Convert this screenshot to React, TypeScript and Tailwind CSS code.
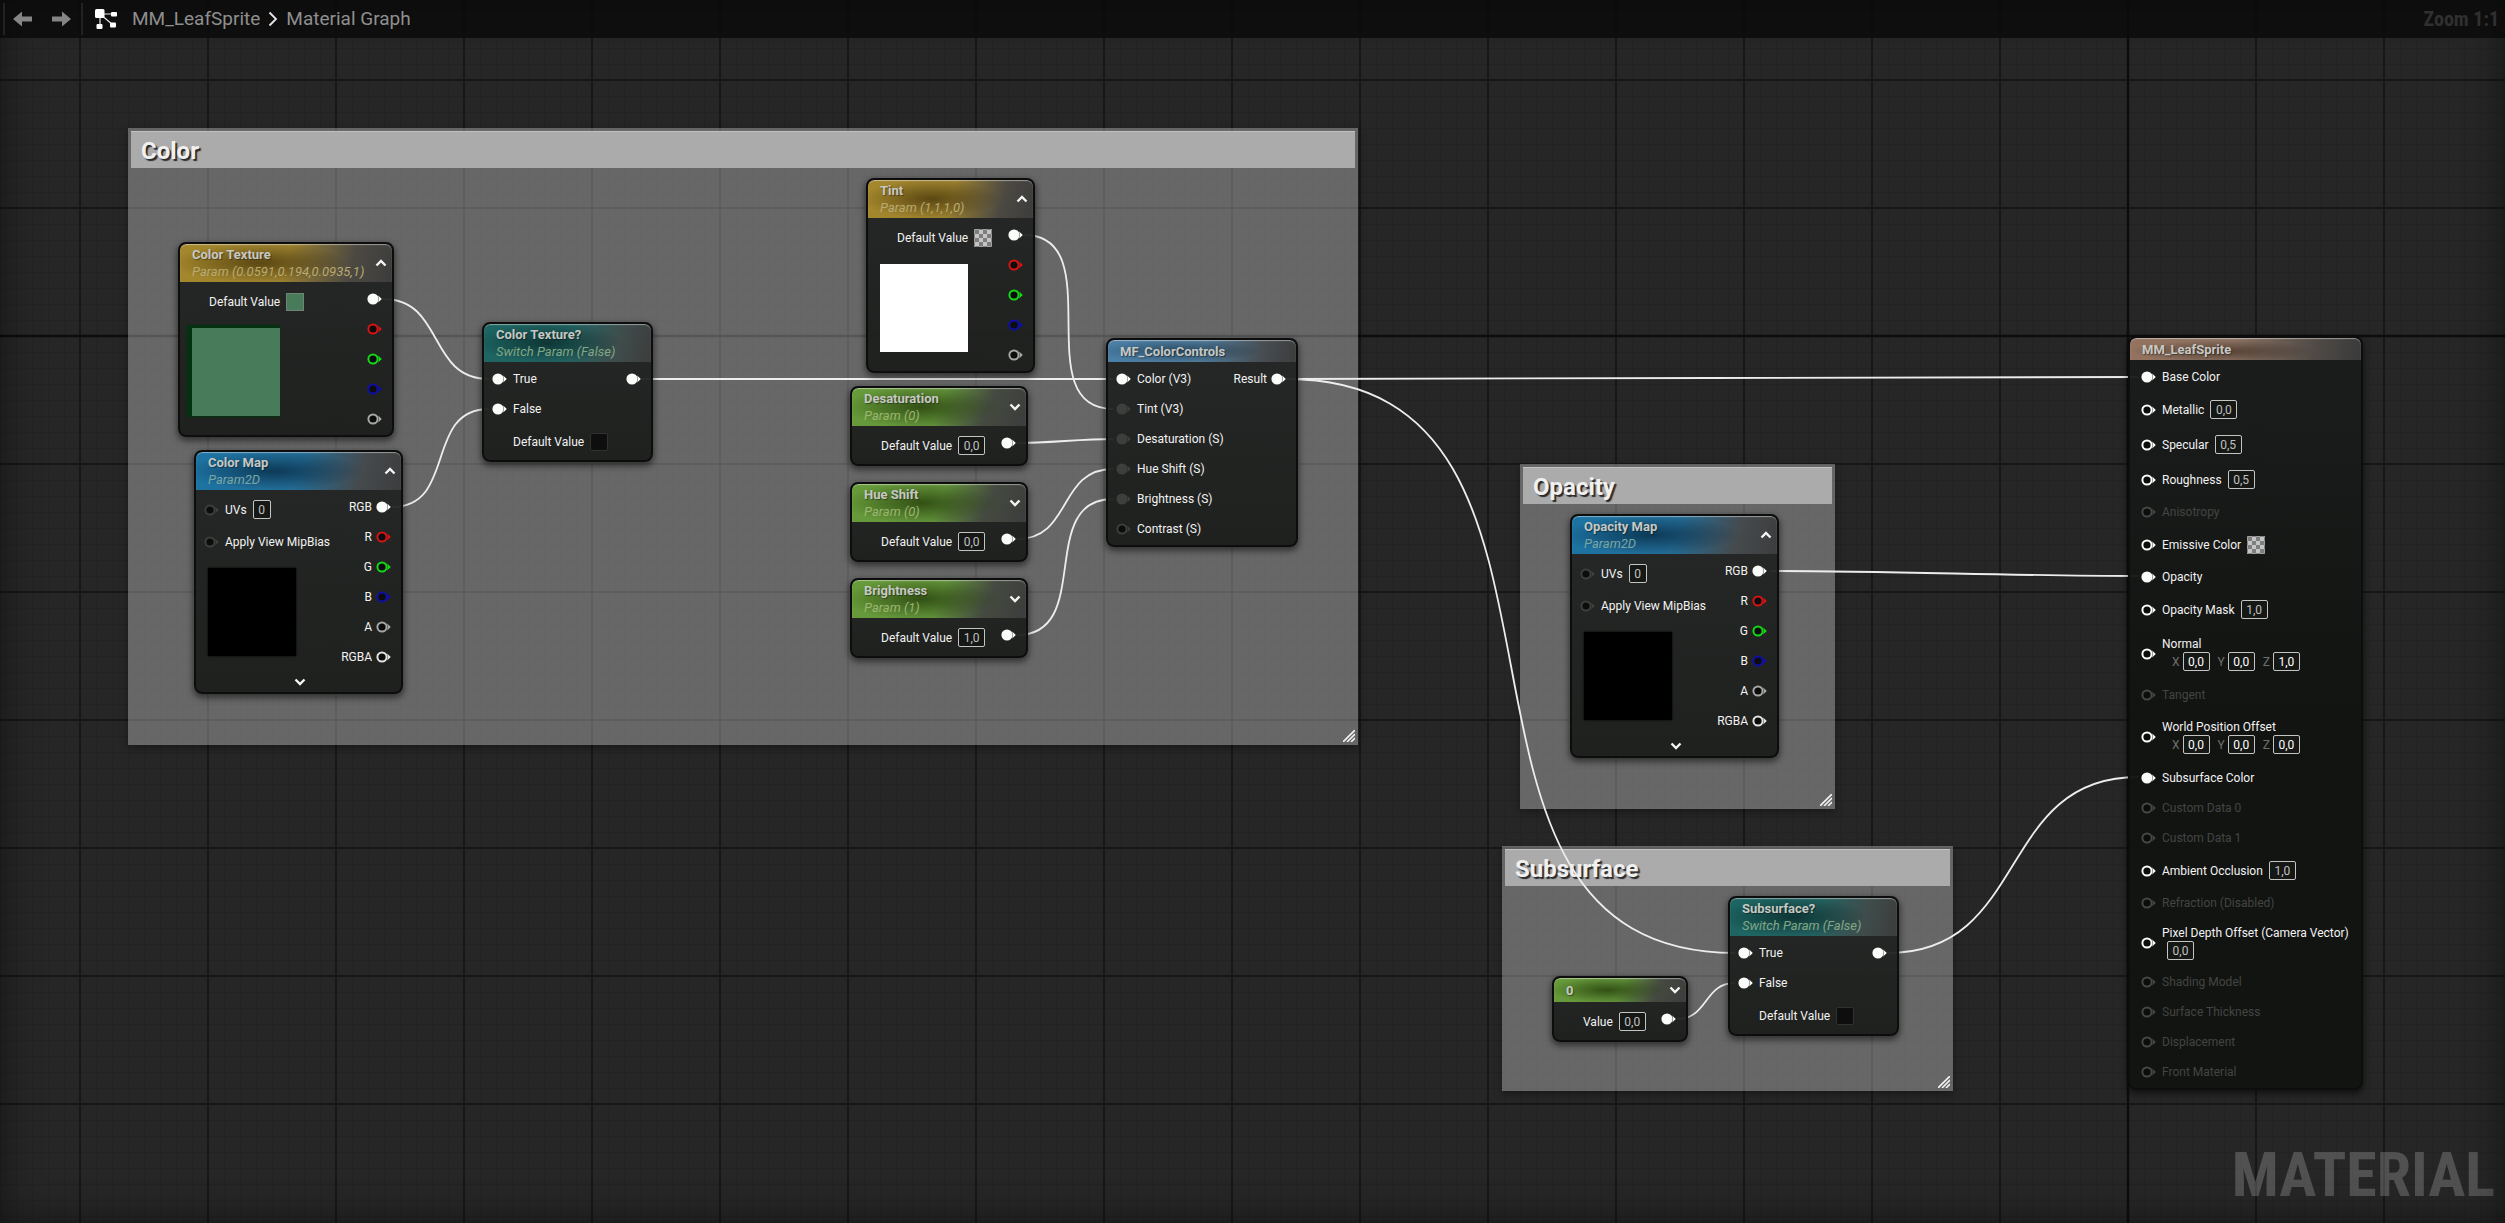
import React from "react";

type Point = [number, number];
type Tone = "yellow" | "teal" | "blue" | "steel" | "green" | "brown";

const HEADER_TONE: Record<Tone, string> = {
  yellow:
    "bg-[radial-gradient(ellipse_42%_50%_at_38%_50%,rgba(50,36,0,0.62),transparent),linear-gradient(105deg,#a5882c_0%,#9a8030_50%,#4c4942_80%,#3c3c3c_100%)]",
  teal:
    "bg-[radial-gradient(ellipse_44%_54%_at_38%_50%,rgba(0,22,22,0.6),transparent),linear-gradient(105deg,#1c6562_0%,#236664_50%,#3f4c4b_80%,#3c3c3c_100%)]",
  blue:
    "bg-[radial-gradient(ellipse_44%_50%_at_38%_50%,rgba(0,26,46,0.62),transparent),linear-gradient(105deg,#1c74a4_0%,#236c96_50%,#464a4d_80%,#3c3c3c_100%)]",
  steel:
    "bg-[radial-gradient(ellipse_44%_50%_at_38%_50%,rgba(8,24,38,0.5),transparent),linear-gradient(100deg,#4a7fa6_0%,#4f7a99_50%,#474d52_82%,#3c3c3c_100%)]",
  green:
    "bg-[radial-gradient(ellipse_44%_54%_at_40%_50%,rgba(24,44,0,0.66),transparent),linear-gradient(112deg,#679b39_0%,#64953c_50%,#454b40_76%,#3c3c3c_100%)]",
  brown:
    "bg-[radial-gradient(ellipse_40%_50%_at_40%_60%,rgba(40,26,16,0.55),transparent),linear-gradient(100deg,#94735f_0%,#8a7162_45%,#4f4a46_80%,#3a3a3a_100%)]",
};

const SUBTITLE_TONE: Record<Tone, string> = {
  yellow: "text-[#b9aa72]",
  teal: "text-[#82a786]",
  blue: "text-[#7ba5a2]",
  steel: "text-[#9fb0a0]",
  green: "text-[#9cb570]",
  brown: "text-[#b0a090]",
};

const WHITE = "#fbfdfa";
const DIM = "#3d3f3c";

function Pin({ color = WHITE, filled = false }: { color?: string; filled?: boolean }) {
  return (
    <svg width="15" height="12" viewBox="0 0 15 12" className="shrink-0" aria-hidden="true">
      <circle cx="6" cy="6" r="4.6" stroke={color} strokeWidth="2" fill={filled ? color : "#0b0c0b"} />
      <path d="M11.2 2.6 L14.8 6 L11.2 9.4 Q12.6 6 11.2 2.6 Z" fill={color} />
    </svg>
  );
}

function Chevron({ up = false }: { up?: boolean }) {
  return (
    <svg width="12" height="12" viewBox="0 0 12 12" aria-hidden="true">
      <path
        d={up ? "M1.5 8.5 L6 4 L10.5 8.5" : "M1.5 3.5 L6 8 L10.5 3.5"}
        stroke="#f4f4f4"
        strokeWidth="2.4"
        fill="none"
      />
    </svg>
  );
}

function NumberBox({ value, label, bright = false }: { value: string; label: string; bright?: boolean }) {
  return (
    <input
      aria-label={label}
      defaultValue={value}
      className={`h-[19px] rounded-xs border border-[#c4c4c4] bg-[#161816] p-0 text-center text-xs ${
        value.length > 1 ? "w-[27px]" : "w-[18px]"
      } ${bright ? "text-white" : "text-[#c0c0c0]"}`}
    />
  );
}

function Swatch({ label, color }: { label: string; color?: string }) {
  return (
    <button
      type="button"
      aria-label={label}
      className={`size-[18px] border border-[#8a8a8a]/60 ${
        color ?? "bg-[repeating-conic-gradient(#c4c4c4_0_25%,#7e7e7e_0_50%)] bg-[length:8px_8px]"
      }`}
    />
  );
}

function Check({ label }: { label: string }) {
  return (
    <input
      type="checkbox"
      aria-label={label}
      className="size-[18px] appearance-none rounded-xs border border-[#303230] bg-[#0d0e0d]"
    />
  );
}

/* ---------- node rows ---------- */

function InputRow({
  label,
  tall = false,
  pin = true,
  filled = false,
  dim = false,
  disabled = false,
  children,
}: {
  label: string;
  tall?: boolean;
  pin?: boolean;
  filled?: boolean;
  dim?: boolean;
  disabled?: boolean;
  children?: React.ReactNode;
}) {
  return (
    <div className={`flex items-center gap-1.5 ${tall ? "h-[35px]" : "h-[30px]"}`}>
      {pin ? <Pin color={disabled ? "#454745" : dim ? DIM : WHITE} filled={filled} /> : <span className="w-[15px]" />}
      <span className={disabled ? "text-[#434543]" : "text-[#f2f2f2]"}>{label}</span>
      {children}
    </div>
  );
}

function StackedRow({ label, tight = false, children }: { label: string; tight?: boolean; children: React.ReactNode }) {
  return (
    <div className={`flex items-center gap-1.5 ${tight ? "py-[7px]" : "py-[9px]"}`}>
      <Pin />
      <div className="flex flex-col">
        <span className="leading-4 text-[#f2f2f2]">{label}</span>
        {children}
      </div>
    </div>
  );
}

function VectorFields({ label, values }: { label: string; values: string[] }) {
  return (
    <div className="flex gap-2 pl-[10px]">
      {values.map((v, i) => (
        <label key={i} className="flex items-center gap-[3px] text-[#6e706e]">
          {"XYZ"[i]}
          <NumberBox value={v} label={`${label} ${"XYZ"[i]}`} bright />
        </label>
      ))}
    </div>
  );
}

function Outputs({ pins }: { pins: { label?: string; color?: string; filled?: boolean }[] }) {
  return (
    <div className="flex flex-col items-end">
      {pins.map((p, i) => (
        <div key={i} className="flex h-[30px] items-center gap-1 text-[#f2f2f2]">
          {p.label && <span>{p.label}</span>}
          <Pin color={p.color} filled={p.filled} />
        </div>
      ))}
    </div>
  );
}

const RED = "#d81313";
const GREEN = "#14d814";
const BLUE = "#0f0fa8";
const GRAY = "#a6a8a6";

const COLOR_OUTPUTS = [{ filled: true }, { color: RED }, { color: GREEN }, { color: BLUE }, { color: GRAY }];
const TEXTURE_OUTPUTS = [
  { label: "RGB", filled: true },
  { label: "R", color: RED },
  { label: "G", color: GREEN },
  { label: "B", color: BLUE },
  { label: "A", color: GRAY },
  { label: "RGBA", color: "#e2e4e2" },
];

/* ---------- nodes ---------- */

function Node({
  at,
  width,
  tone,
  title,
  subtitle,
  toggle,
  dark = false,
  children,
}: {
  at: Point;
  width: string;
  tone: Tone;
  title: string;
  subtitle?: string;
  toggle?: "up" | "down";
  dark?: boolean;
  children: React.ReactNode;
}) {
  return (
    <article
      style={{ left: at[0], top: at[1] }}
      className={`absolute overflow-hidden rounded-lg border-2 border-[#0c0d0c] pb-px shadow-[0_3px_6px_1px_rgba(0,0,0,0.5)] ${width} ${
        dark ? "bg-linear-to-b from-[#1b1d1c]/96 to-[#111311]/96 to-50%" : "bg-linear-to-b from-[#222423]/94 to-[#1a1c1a]/94"
      }`}
    >
      <header
        className={`relative flex items-center justify-between rounded-t-md pr-[5px] pl-3 shadow-[inset_0_1px_1px_rgba(255,255,255,0.45)] ${
          HEADER_TONE[tone]
        } ${subtitle ? "h-[38px]" : toggle ? "h-6" : "h-[22px]"}`}
      >
        <div>
          <h3 className="text-[13px] leading-[17px] font-bold text-[#c6c8c4] [text-shadow:1px_1px_1px_rgba(0,0,0,0.4)]">
            {title}
          </h3>
          {subtitle && (
            <p className={`text-[13px] leading-[17px] whitespace-nowrap italic ${SUBTITLE_TONE[tone]}`}>{subtitle}</p>
          )}
        </div>
        {toggle && (
          <button type="button" aria-label={`Toggle ${title} preview`}>
            <Chevron up={toggle === "up"} />
          </button>
        )}
      </header>
      <div className="flex justify-between pt-0.5 pr-2.5 pl-2">{children}</div>
    </article>
  );
}

function ColorParamNode({
  at,
  width,
  title,
  subtitle,
  swatch,
  preview,
}: {
  at: Point;
  width: string;
  title: string;
  subtitle: string;
  swatch?: string;
  preview: string;
}) {
  return (
    <Node at={at} width={width} tone="yellow" title={title} subtitle={subtitle} toggle="up">
      <div>
        <InputRow label="Default Value" pin={false} tall>
          <Swatch label={`${title} default value`} color={swatch} />
        </InputRow>
        <div className={`mt-[9px] ml-1 size-[88px] ${preview}`} />
      </div>
      <Outputs pins={COLOR_OUTPUTS} />
    </Node>
  );
}

function TextureNode({ at, title }: { at: Point; title: string }) {
  return (
    <Node at={at} width="w-[209px]" tone="blue" title={title} subtitle="Param2D" toggle="up">
      <div className="pb-[3px]">
        <InputRow label="UVs" dim tall>
          <NumberBox value="0" label={`${title} UVs`} />
        </InputRow>
        <InputRow label="Apply View MipBias" dim />
        <div className="mt-[11px] ml-1 size-[88px] bg-black shadow-[0_0_2px_#000]" />
        <button type="button" aria-label={`More ${title} pins`} className="mt-5 ml-[90px] block">
          <Chevron />
        </button>
      </div>
      <Outputs pins={TEXTURE_OUTPUTS} />
    </Node>
  );
}

function ScalarNode({ at, title, value }: { at: Point; title: string; value: string }) {
  return (
    <Node
      at={at}
      width="w-[178px]"
      tone="green"
      title={title}
      subtitle={`Param (${parseInt(value, 10)})`}
      toggle="down"
    >
      <InputRow label="Default Value" pin={false} tall>
        <NumberBox value={value} label={`${title} default value`} />
      </InputRow>
      <Outputs pins={[{ filled: true }]} />
    </Node>
  );
}

function SwitchNode({ at, title }: { at: Point; title: string }) {
  return (
    <Node at={at} width="w-[171px]" tone="teal" title={title} subtitle="Switch Param (False)">
      <div>
        <InputRow label="True" filled />
        <InputRow label="False" filled />
        <InputRow label="Default Value" pin={false} tall>
          <Check label={`${title} default value`} />
        </InputRow>
      </div>
      <Outputs pins={[{ filled: true }]} />
    </Node>
  );
}

function MaterialNode({ at }: { at: Point }) {
  return (
    <Node at={at} width="w-[235px]" tone="brown" title="MM_LeafSprite" dark>
      <div className="pl-[3px]">
        <InputRow label="Base Color" filled />
        <InputRow label="Metallic" tall>
          <NumberBox value="0,0" label="Metallic" />
        </InputRow>
        <InputRow label="Specular" tall>
          <NumberBox value="0,5" label="Specular" />
        </InputRow>
        <InputRow label="Roughness" tall>
          <NumberBox value="0,5" label="Roughness" />
        </InputRow>
        <InputRow label="Anisotropy" disabled />
        <InputRow label="Emissive Color" tall>
          <Swatch label="Emissive Color" />
        </InputRow>
        <InputRow label="Opacity" filled />
        <InputRow label="Opacity Mask" tall>
          <NumberBox value="1,0" label="Opacity Mask" />
        </InputRow>
        <StackedRow label="Normal">
          <VectorFields label="Normal" values={["0,0", "0,0", "1,0"]} />
        </StackedRow>
        <InputRow label="Tangent" disabled />
        <StackedRow label="World Position Offset">
          <VectorFields label="World Position Offset" values={["0,0", "0,0", "0,0"]} />
        </StackedRow>
        <InputRow label="Subsurface Color" filled />
        <InputRow label="Custom Data 0" disabled />
        <InputRow label="Custom Data 1" disabled />
        <InputRow label="Ambient Occlusion" tall>
          <NumberBox value="1,0" label="Ambient Occlusion" />
        </InputRow>
        <InputRow label="Refraction (Disabled)" disabled />
        <StackedRow label="Pixel Depth Offset (Camera Vector)" tight>
          <div className="flex pl-[5px]">
            <NumberBox value="0,0" label="Pixel Depth Offset" />
          </div>
        </StackedRow>
        <InputRow label="Shading Model" disabled />
        <InputRow label="Surface Thickness" disabled />
        <InputRow label="Displacement" disabled />
        <InputRow label="Front Material" disabled />
      </div>
    </Node>
  );
}

/* ---------- comment boxes ---------- */

function CommentBox({ title, at, size }: { title: string; at: Point; size: string }) {
  return (
    <section
      style={{ left: at[0], top: at[1] }}
      className={`absolute border-[3px] border-transparent bg-white/30 bg-clip-border shadow-[0_3px_8px_rgba(0,0,0,0.35)] ${size}`}
    >
      <h2 className="h-[37px] border-t border-[#c2c2c2] bg-[#ababab] px-2.5 pt-px text-2xl leading-9 font-bold text-[#f0f0f0] [text-shadow:2px_2px_1px_#2a2a2a]">
        {title}
      </h2>
      <svg width="12" height="12" viewBox="0 0 12 12" className="absolute right-0 bottom-0" aria-hidden="true">
        <path d="M0 12 L12 0 M4 12 L12 4 M8 12 L12 8" stroke="#f2f2f2" strokeWidth="1.6" />
      </svg>
    </section>
  );
}

/* ---------- wires ---------- */

const WIRES: [Point, Point][] = [
  [[383, 299], [489, 379]],
  [[392, 507], [489, 409]],
  [[642, 379], [1113, 379]],
  [[1024, 235], [1113, 409]],
  [[1017, 443], [1113, 439]],
  [[1017, 539], [1113, 469]],
  [[1017, 635], [1113, 499]],
  [[1287, 379], [2138, 377]],
  [[1287, 379], [1735, 953]],
  [[1770, 571], [2138, 576]],
  [[1677, 1019], [1735, 983]],
  [[1888, 953], [2138, 777]],
];

function wirePath([[x1, y1], [x2, y2]]: [Point, Point]) {
  const reach = (Math.min(Math.abs(x2 - x1), 1000) + Math.min(Math.abs(y2 - y1), 1000)) / 3;
  return `M${x1} ${y1} C${x1 + reach} ${y1} ${x2 - reach} ${y2} ${x2} ${y2}`;
}

/* ---------- page ---------- */

function Toolbar() {
  return (
    <header className="z-10 col-start-1 row-start-1 flex h-[38px] items-center self-start bg-[#0b0b0b]/85 text-[19px] text-[#8f8f8f]">
      <nav className="flex h-full flex-1 items-center" aria-label="Breadcrumb">
        <span className="ml-[3px] h-8 w-[2px] bg-[#222]" />
        <button type="button" aria-label="Back" className="ml-2">
          <svg width="19" height="16" viewBox="0 0 19 16" aria-hidden="true">
            <path d="M0 8 L9 0.5 V5.5 H19 V10.5 H9 V15.5 Z" fill="#858585" />
          </svg>
        </button>
        <button type="button" aria-label="Forward" className="ml-5">
          <svg width="19" height="16" viewBox="0 0 19 16" aria-hidden="true">
            <path d="M19 8 L10 0.5 V5.5 H0 V10.5 H10 V15.5 Z" fill="#858585" />
          </svg>
        </button>
        <span className="ml-[10px] h-8 w-[2px] bg-[#222]" />
        <svg width="22" height="20" viewBox="0 0 22 20" className="ml-3" aria-hidden="true">
          <path d="M5 5 H18 M5 5 V17 M5 5 L18 16" stroke="#e8e8e8" strokeWidth="1.2" />
          <rect x="0" y="0" width="9.5" height="9" rx="1.5" fill="#fff" />
          <rect x="16" y="3" width="6" height="4.5" rx="1" fill="#fff" />
          <rect x="1.5" y="15" width="6" height="5" rx="1" fill="#fff" />
          <rect x="15" y="13.5" width="6" height="5" rx="1" fill="#fff" />
        </svg>
        <a href="#material" className="ml-[15px]">
          MM_LeafSprite
        </a>
        <svg width="10" height="16" viewBox="0 0 10 16" className="mx-2" aria-hidden="true">
          <path d="M1.5 1.5 L8 8 L1.5 14.5" stroke="#e6e6e6" strokeWidth="1.8" fill="none" />
        </svg>
        <a href="#graph">Material Graph</a>
      </nav>
      <span className="pr-[6px] font-['Roboto_Condensed','Roboto',sans-serif] text-xl font-bold text-[#303030]">
        Zoom 1:1
      </span>
    </header>
  );
}

export default function App() {
  return (
    <div className="grid min-h-screen overflow-hidden bg-[#262626] font-['Roboto',sans-serif] text-xs">
      <main
        className={
          "relative col-start-1 row-start-1 overflow-hidden " +
          "bg-[linear-gradient(to_right,#0a0a0a_2px,transparent_2px),linear-gradient(to_bottom,#0a0a0a_2px,transparent_2px),linear-gradient(to_right,#171717_2px,transparent_2px),linear-gradient(to_bottom,#171717_2px,transparent_2px),linear-gradient(to_right,#232323_1px,transparent_1px),linear-gradient(to_bottom,#232323_1px,transparent_1px)] " +
          "bg-[size:4096px_4096px,4096px_4096px,128px_128px,128px_128px,16px_16px,16px_16px] " +
          "bg-[position:2127px_0,0_335px,79px_0,0_79px,0_0,0_0]"
        }
      >
        <CommentBox title="Color" at={[128, 128]} size="h-[617px] w-[1230px]" />
        <CommentBox title="Opacity" at={[1520, 464]} size="h-[345px] w-[315px]" />
        <CommentBox title="Subsurface" at={[1502, 846]} size="h-[245px] w-[451px]" />

        <svg className="absolute inset-0 size-full" fill="none" stroke="#ededed" strokeWidth="1.8" aria-hidden="true">
          {WIRES.map((w, i) => (
            <path key={i} d={wirePath(w)} />
          ))}
        </svg>

        <ColorParamNode
          at={[178, 242]}
          width="w-[216px]"
          title="Color Texture"
          subtitle="Param (0.0591,0.194,0.0935,1)"
          swatch="bg-[#487b5a]"
          preview="bg-[#487b5a] shadow-[-3px_-1px_1px_2px_#04310f]"
        />
        <TextureNode at={[194, 450]} title="Color Map" />
        <SwitchNode at={[482, 322]} title="Color Texture?" />
        <ColorParamNode at={[866, 178]} width="w-[169px]" title="Tint" subtitle="Param (1,1,1,0)" preview="bg-white" />
        <ScalarNode at={[850, 386]} title="Desaturation" value="0,0" />
        <ScalarNode at={[850, 482]} title="Hue Shift" value="0,0" />
        <ScalarNode at={[850, 578]} title="Brightness" value="1,0" />

        <Node at={[1106, 338]} width="w-[192px]" tone="steel" title="MF_ColorControls">
          <div>
            <InputRow label="Color (V3)" filled />
            <InputRow label="Tint (V3)" dim filled />
            <InputRow label="Desaturation (S)" dim filled />
            <InputRow label="Hue Shift (S)" dim filled />
            <InputRow label="Brightness (S)" dim filled />
            <InputRow label="Contrast (S)" dim />
          </div>
          <Outputs pins={[{ label: "Result", filled: true }]} />
        </Node>

        <TextureNode at={[1570, 514]} title="Opacity Map" />

        <Node at={[1552, 976]} width="w-[136px]" tone="green" title="0" toggle="down">
          <InputRow label="Value" pin={false} tall>
            <NumberBox value="0,0" label="Constant value" />
          </InputRow>
          <Outputs pins={[{ filled: true }]} />
        </Node>
        <SwitchNode at={[1728, 896]} title="Subsurface?" />

        <MaterialNode at={[2128, 336]} />
      </main>

      <p className="pointer-events-none z-10 col-start-1 row-start-1 self-end justify-self-end pr-2.5 pb-3 font-['Roboto_Condensed','Roboto',sans-serif] text-[62px] leading-[72px] font-bold text-white/20">
        MATERIAL
      </p>
      <div className="pointer-events-none z-10 col-start-1 row-start-1 shadow-[inset_0_0_36px_rgba(0,0,0,0.5)]" />
      <Toolbar />
    </div>
  );
}
